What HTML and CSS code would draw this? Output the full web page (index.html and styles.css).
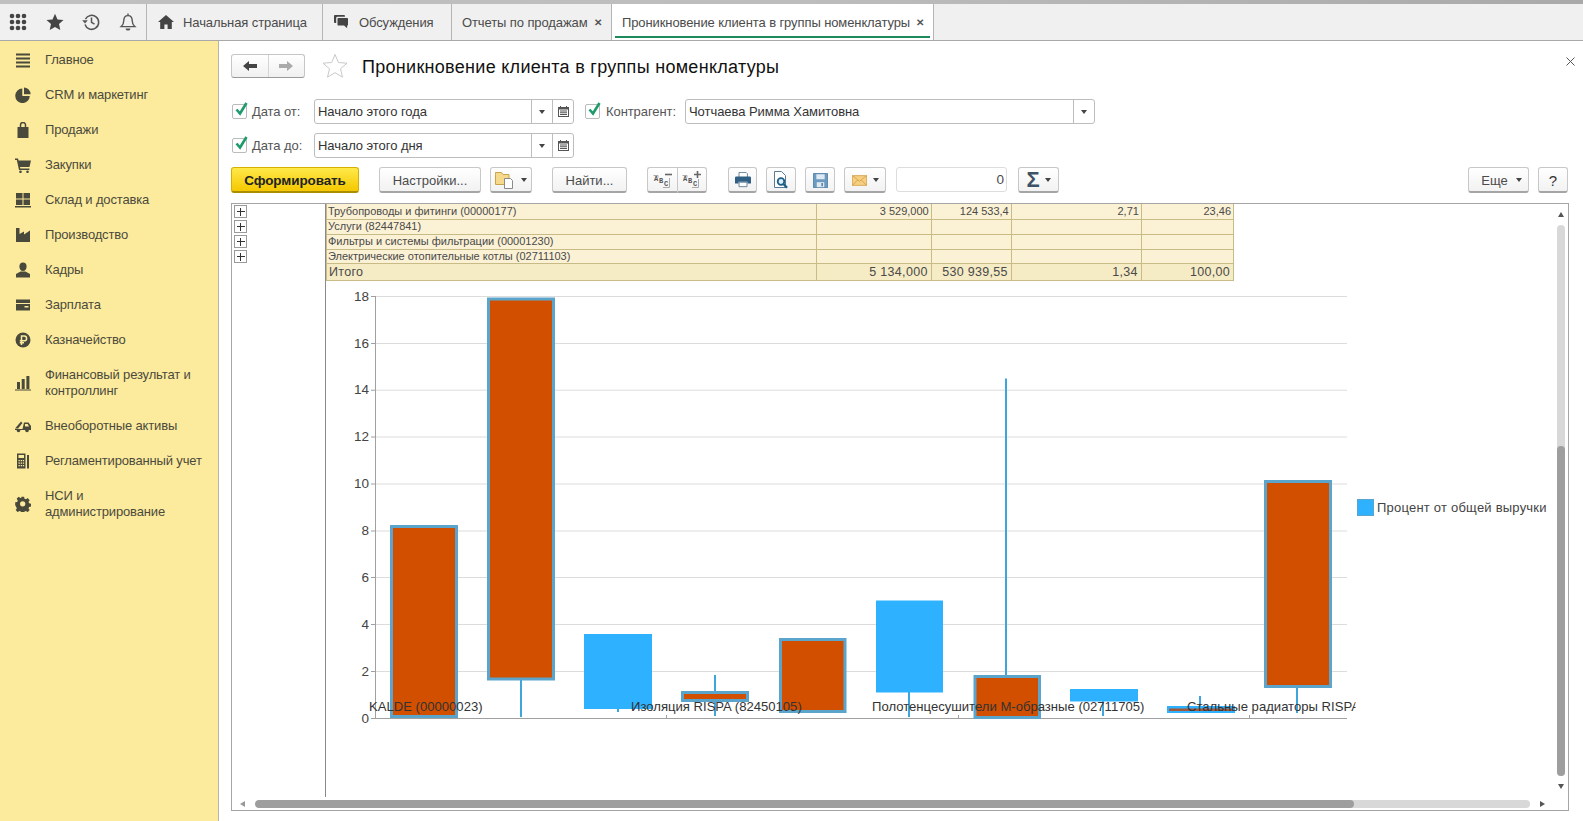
FILE: index.html
```html
<!DOCTYPE html>
<html lang="ru">
<head>
<meta charset="utf-8">
<title>Проникновение клиента в группы номенклатуры</title>
<link rel="stylesheet" href="styles.css">
</head>
<body>
<div class="topline"></div>
<header class="tabbar">
  <div class="quick">
    <svg class="qi" viewBox="0 0 18 18" width="18" height="18"><g fill="#444"><circle cx="3" cy="3" r="2.3"/><circle cx="9" cy="3" r="2.3"/><circle cx="15" cy="3" r="2.3"/><circle cx="3" cy="9" r="2.3"/><circle cx="9" cy="9" r="2.3"/><circle cx="15" cy="9" r="2.3"/><circle cx="3" cy="15" r="2.3"/><circle cx="9" cy="15" r="2.3"/><circle cx="15" cy="15" r="2.3"/></g></svg>
    <svg class="qi" viewBox="0 0 18 18" width="18" height="18"><path fill="#444" d="M9 .8l2.5 5.6 6 .6-4.5 4 1.3 6L9 14l-5.3 3 1.3-6-4.5-4 6-.6z"/></svg>
    <svg class="qi" viewBox="0 0 18 18" width="18" height="18"><g fill="none" stroke="#555" stroke-width="1.5"><path d="M3.4 6.2A7 7 0 1 1 3 11.5"/><path d="M9.5 4.6V9.4l3 1.8"/></g><path fill="#555" d="M.2 7.2h5.6L3 10.6z"/></svg>
    <svg class="qi" viewBox="0 0 18 18" width="18" height="18"><g fill="none" stroke="#555" stroke-width="1.4"><path d="M9 2.6c-3 0-4.2 2.3-4.2 5 0 3-1 4.6-2.6 6h13.6c-1.6-1.4-2.6-3-2.6-6 0-2.7-1.2-5-4.2-5z"/><path d="M9 .4v2.2"/></g><path fill="#555" d="M6.6 15.4h4.8A2.4 2.2 0 0 1 6.6 15.4z"/></svg>
  </div>
  <nav class="tabs">
    <div class="tab tab-home">
      <svg viewBox="0 0 16 14" width="16" height="14"><path fill="#444" d="M8 0l8 7h-2.2v7H9.6V9.4H6.4V14H2.2V7H0z"/></svg>
      <span>Начальная страница</span>
    </div>
    <div class="tab tab-disc">
      <svg viewBox="0 0 16 16" width="14" height="14"><path fill="#444" d="M1 0h10.5a1 1 0 0 1 1 1v1H4a1.5 1.5 0 0 0-1.500 1.500V9H1a1 1 0 0 1-1-1V1a1 1 0 0 1 1-1z"/><path fill="#444" d="M5 3.500h10a1 1 0 0 1 1 1V11a1 1 0 0 1-1 1v3l-3.500-3H5a1 1 0 0 1-1-1V4.500a1 1 0 0 1 1-1z"/></svg>
      <span>Обсуждения</span>
    </div>
    <div class="tab tab-sales"><span>Отчеты по продажам</span><b class="x">✕</b></div>
    <div class="tab tab-active"><span>Проникновение клиента в группы номенклатуры</span><b class="x">✕</b></div>
  </nav>
</header>
<div class="main">
  <aside class="side">
    <div class="si"><svg viewBox="0 0 16 16"><path d="M1 1.500h14v2H1zM1 5.500h14v2H1zM1 9.500h14v2H1zM1 13.500h14v2H1z"/></svg><span>Главное</span></div>
    <div class="si"><svg viewBox="0 0 16 16"><path d="M7.300 1.500v7.500H14.800A7.300 7.300 0 1 1 7.300 1.500z"/><path d="M9 .5a6.800 6.800 0 0 1 6.600 6.700H9z"/></svg><span>CRM и маркетинг</span></div>
    <div class="si"><svg viewBox="0 0 16 16"><path d="M2.500 5h11v11h-11z"/><path fill="none" stroke="#4a4a3c" stroke-width="1.500" d="M5.500 7V3a2.500 2.500 0 0 1 5 0v4"/></svg><span>Продажи</span></div>
    <div class="si"><svg viewBox="0 0 16 16"><path d="M0 1.500h3l.6 2H16l-1.500 6.500H5l.4 1.500h9v1.500H4L1.800 3H0z"/><circle cx="5.500" cy="14.800" r="1.300"/><circle cx="12.500" cy="14.800" r="1.300"/></svg><span>Закупки</span></div>
    <div class="si"><svg viewBox="0 0 16 16"><path d="M1 1h6.500v5.500H1zM8.500 1H15v5.500H8.500zM1 7.500h6.500V13H1zM8.500 7.500H15V13H8.500zM0 14h16v1.500H0z"/></svg><span>Склад и доставка</span></div>
    <div class="si"><svg viewBox="0 0 16 16"><path d="M1 1h3.500v6L9 4.500v3l6-4V15H1z"/></svg><span>Производство</span></div>
    <div class="si"><svg viewBox="0 0 16 16"><path d="M8 .5c2.300 0 3.600 1.700 3.600 3.900S10.300 9 8 9 4.400 6.600 4.400 4.400 5.700.5 8 .5z"/><path d="M5.500 9.500h5L15 12v3.500H1V12z"/></svg><span>Кадры</span></div>
    <div class="si"><svg viewBox="0 0 16 16"><path d="M1 2.500h14V6H1zM1 7h14v6.500H1z"/><path fill="#fdeb9d" d="M9.500 9h4v1.500h-4z"/></svg><span>Зарплата</span></div>
    <div class="si"><svg viewBox="0 0 16 16"><circle cx="8" cy="8" r="7.500"/><path fill="none" stroke="#fdeb9d" stroke-width="1.500" d="M6.500 13V4h2.700a2.300 2.300 0 0 1 0 4.800H4.800M4.800 10.800H9"/></svg><span>Казначейство</span></div>
    <div class="si si2"><svg viewBox="0 0 16 16"><path d="M2 7h3v7H2zM6.700 4h3v10h-3zM11.400 1h3v13h-3zM0 14.500h16V15.500H0z"/></svg><span>Финансовый результат и контроллинг</span></div>
    <div class="si"><svg viewBox="0 0 16 16"><path d="M0 10.500L6 3.500 7.500 5 3 10.500zM9 4.500h4.500L16 8v4H0v-1h7.500zM10 6v2.500h4L12.700 6z"/><circle cx="3.500" cy="12.500" r="1.800"/><circle cx="12" cy="12.500" r="1.800"/></svg><span>Внеоборотные активы</span></div>
    <div class="si"><svg viewBox="0 0 16 16"><path d="M2 .5h8.500v15H2z"/><path fill="#fdeb9d" d="M3.500 2h5.500v3H3.500zM3.500 7h1.300v1.300H3.500zM5.700 7H7v1.300H5.700zM7.800 7h1.300v1.300H7.800zM3.500 9.500h1.300v1.300H3.500zM5.700 9.500H7v1.300H5.700zM7.800 9.500h1.300v1.300H7.800zM3.500 12h1.300v1.300H3.500zM5.700 12H7v1.300H5.700zM7.800 12h1.300v1.300H7.800z"/><path d="M12 2h2v13.500h-2z"/></svg><span>Регламентированный учет</span></div>
    <div class="si si2"><svg viewBox="0 0 16 16"><path fill-rule="evenodd" d="M6.500.5h3l.4 2.100 1.500.6 1.800-1.200 2.100 2.100-1.200 1.800.6 1.500 2.100.4v3l-2.100.4-.6 1.500 1.200 1.800-2.100 2.100-1.800-1.200-1.500.6-.4 2.100h-3l-.4-2.100-1.500-.6-1.800 1.200-2.100-2.100 1.200-1.800-.6-1.500L.2 9.400v-3l2.100-.4.6-1.500L1.700 2.700 3.800.6l1.800 1.200 1.500-.6zM8 5.200a2.700 2.700 0 1 0 0 5.500 2.700 2.700 0 0 0 0-5.500z" transform="translate(0 .2) scale(.96)"/></svg><span>НСИ и<br>администрирование</span></div>
  </aside>
  <main class="content">
    <div class="head">
      <div class="nav-group">
        <div class="nav-b nav-back"><svg viewBox="0 0 14 10" width="14" height="10"><path fill="#444" d="M0 5l6-5v3h8v4H6v3z"/></svg></div>
        <div class="nav-b"><svg viewBox="0 0 14 10" width="14" height="10"><path fill="#aaa" d="M14 5L8 0v3H0v4h8v3z"/></svg></div>
      </div>
      <svg class="fav" viewBox="0 0 26 25" width="26" height="25"><path fill="#fff" stroke="#c9c9c9" d="M13 1.500l3.400 8 8.600.7-6.500 5.600 2 8.400L13 19.700 5.500 24.200l2-8.400L1 10.200l8.600-.7z"/></svg>
      <h1>Проникновение клиента в группы номенклатуры</h1>
      <svg class="close" viewBox="0 0 9 9" width="9" height="9"><path stroke="#555" fill="none" d="M.5.500l8 8M8.500.500l-8 8"/></svg>
    </div>
    <div class="filters">
      <div class="frow">
        <span class="chk"><svg viewBox="0 0 16 16" width="16" height="16"><path fill="none" stroke="#1f9a6b" stroke-width="2.600" d="M3.500 7.500l3.500 4L13.500 1"/></svg></span>
        <label class="lab lab1">Дата от:</label>
        <div class="inp inp-date"><span class="val">Начало этого года</span><i class="drop"><s class="tri"></s></i><i class="cal"><svg viewBox="0 0 11 11" width="11" height="11"><path fill="#555" d="M0 1h2V0h1v1h5V0h1v1h2v10H0zM1 3.500V10h9V3.500z"/><path fill="#555" d="M2 4.500h7v1H2zM2 6.300h7v1H2zM2 8.100h7v1H2z"/></svg></i></div>
        <span class="chk chk2"><svg viewBox="0 0 16 16" width="16" height="16"><path fill="none" stroke="#1f9a6b" stroke-width="2.600" d="M3.500 7.500l3.500 4L13.500 1"/></svg></span>
        <label class="lab lab2">Контрагент:</label>
        <div class="inp inp-cp"><span class="val">Чотчаева Римма Хамитовна</span><i class="drop"><s class="tri"></s></i></div>
      </div>
      <div class="frow">
        <span class="chk"><svg viewBox="0 0 16 16" width="16" height="16"><path fill="none" stroke="#1f9a6b" stroke-width="2.600" d="M3.500 7.500l3.500 4L13.500 1"/></svg></span>
        <label class="lab lab1">Дата до:</label>
        <div class="inp inp-date"><span class="val">Начало этого дня</span><i class="drop"><s class="tri"></s></i><i class="cal"><svg viewBox="0 0 11 11" width="11" height="11"><path fill="#555" d="M0 1h2V0h1v1h5V0h1v1h2v10H0zM1 3.500V10h9V3.500z"/><path fill="#555" d="M2 4.500h7v1H2zM2 6.300h7v1H2zM2 8.100h7v1H2z"/></svg></i></div>
      </div>
    </div>
    <div class="toolbar">
      <button class="btn primary">Сформировать</button>
      <button class="btn b-set">Настройки...</button>
      <button class="btn b-var"><svg viewBox="0 0 20 18" width="20" height="18"><path fill="#f6d98a" stroke="#c9a24c" d="M.5 3.500V1.500h6l1.500 2h6v10H.5z"/><path fill="#fff" stroke="#8a8a8a" d="M9.500 7.500h6l2 2v8h-8z"/></svg><s class="tri"></s></button>
      <button class="btn b-find">Найти...</button>
      <div class="grp">
        <button class="btn b-abc"><svg viewBox="0 0 20 18" width="20" height="18"><g class="abc"><text x="1" y="10">A</text><text x="6" y="12">B</text><text x="11" y="15">C</text></g><path stroke="#666" stroke-width="1.600" d="M12 3.500h7"/><path fill="none" stroke="#aaa" d="M.5 4.500h4.500v2M16.500 7v9.500H10"/></svg></button>
        <button class="btn b-abc"><svg viewBox="0 0 20 18" width="20" height="18"><g class="abc"><text x="1" y="10">A</text><text x="6" y="12">B</text><text x="11" y="15">C</text></g><path stroke="#666" stroke-width="1.600" d="M12 3.500h7M15.500 0v7"/><path fill="none" stroke="#aaa" d="M.5 4.500h4.500v2M16.500 8v8.500H10"/></svg></button>
      </div>
      <button class="btn b-ico b-print"><svg viewBox="0 0 20 18" width="18" height="16"><path fill="#fff" stroke="#5a7a94" d="M5.500 .5h8l1.500 1.500v5H5.500z"/><path fill="#2f5f83" d="M1 6.500q0-1.500 1.500-1.500h15q1.500 0 1.500 1.500V13h-4v-2H5v2H1z"/><path fill="#fff" stroke="#5a7a94" d="M5.500 11.500h9v5h-9z"/></svg></button>
      <button class="btn b-ico b-prev"><svg viewBox="0 0 20 18" width="20" height="18"><path fill="#fff" stroke="#5a7a94" d="M3.500 .5h7l4 4v12h-11z"/><circle cx="10" cy="10.500" r="3.300" fill="#d9eefc" stroke="#1d5d86" stroke-width="1.800"/><path stroke="#1d5d86" stroke-width="2.400" d="M12.500 13l3.500 3.800"/></svg></button>
      <button class="btn b-ico b-save"><svg viewBox="0 0 18 18" width="15" height="15"><path fill="#6d9ac0" stroke="#4c7a9f" d="M.5.500h17v17H.5z"/><path fill="#dfe9f2" d="M4 1.500h10v6H4z"/><path fill="#dfe9f2" d="M4.500 11h9v6h-9z"/><path fill="#5d86a8" d="M10 12h2v4h-2z"/></svg></button>
      <button class="btn b-mail"><svg viewBox="0 0 20 14" width="15" height="11"><path fill="#f5cf83" stroke="#d09a3a" d="M.5.500h19v13H.5z"/><path fill="none" stroke="#d09a3a" d="M.5.500L10 8 19.500.500M.5 13.500L7.500 6.500M19.500 13.500L12.500 6.500"/></svg><s class="tri"></s></button>
      <div class="numbox">0</div>
      <button class="btn b-sum"><span class="sig">Σ</span><s class="tri"></s></button>
      <div class="spacer"></div>
      <button class="btn b-more">Еще<s class="tri"></s></button>
      <button class="btn b-help">?</button>
    </div>
    <section class="report">
      <div class="gutter">
        <i class="plus"></i><i class="plus"></i><i class="plus"></i><i class="plus"></i>
      </div>
      <div class="sheet">
        <table class="rt">
          <colgroup><col class="c1"><col class="c2"><col class="c3"><col class="c4"><col class="c5"></colgroup>
          <tr><td>Трубопроводы и фитинги (00000177)</td><td class="n">3 529,000</td><td class="n">124 533,4</td><td class="n">2,71</td><td class="n">23,46</td></tr>
          <tr><td>Услуги (82447841)</td><td></td><td></td><td></td><td></td></tr>
          <tr><td>Фильтры и системы фильтрации (00001230)</td><td></td><td></td><td></td><td></td></tr>
          <tr><td>Электрические отопительные котлы (02711103)</td><td></td><td></td><td></td><td></td></tr>
          <tr class="tot"><td>Итого</td><td class="n">5 134,000</td><td class="n">530 939,55</td><td class="n">1,34</td><td class="n">100,00</td></tr>
        </table>
        <svg class="chart" viewBox="326 281 1230 516" width="1230" height="516">
          <defs><clipPath id="lc"><rect x="360" y="690" width="995.500" height="40"/></clipPath></defs>
          <g class="grid">
            <path d="M376 296.500H1347M376 343.500H1347M376 390.200H1347M376 437H1347M376 484H1347M376 531H1347M376 577.500H1347M376 624.500H1347M376 671.500H1347"/>
          </g>
          <path class="axis" d="M375.500 296V718.500H1347M371 296.500h5M371 343.500h5M371 390.200h5M371 437h5M371 484h5M371 531h5M371 577.500h5M371 624.500h5M371 671.500h5M371 718.500h5M666.500 715v4M958.500 715v4M1249.500 715v4"/>
          <g class="yl">
            <text x="369" y="300.500">18</text><text x="369" y="347.500">16</text><text x="369" y="394">14</text><text x="369" y="441">12</text><text x="369" y="488">10</text>
            <text x="369" y="535">8</text><text x="369" y="581.500">6</text><text x="369" y="628.500">4</text><text x="369" y="675.500">2</text><text x="369" y="722.500">0</text>
          </g>
          <g class="wick">
            <path d="M521 680V717M618 708V712M715 675V716M909 692V717M1006 378.500V675M1103 701V716M1200 696V706M1297 687V713"/>
          </g>
          <g class="up">
            <rect x="584" y="634" width="68" height="75"/>
            <rect x="876" y="600.500" width="67" height="92"/>
            <rect x="1070" y="689" width="68" height="12.500"/>
            <rect x="1167" y="706" width="68" height="7"/>
          </g>
          <g class="down">
            <rect x="391.500" y="526.500" width="65" height="190"/>
            <rect x="488.500" y="299" width="65" height="380"/>
            <rect x="682.500" y="692.500" width="65" height="8"/>
            <rect x="780.500" y="639.500" width="64.500" height="72"/>
            <rect x="975" y="676.500" width="64.500" height="41"/>
            <rect x="1265.500" y="481.500" width="65" height="205"/>
          </g>
          <rect class="thin" x="1169" y="708.500" width="64" height="2.500"/>
          <g class="xl" clip-path="url(#lc)">
            <text x="369" y="710.500">KALDE (00000023)</text>
            <text x="631" y="710.500">Изоляция RISPA (82450105)</text>
            <text x="872" y="710.500">Полотенцесушители М-образные (02711705)</text>
            <text x="1187" y="710.500">Стальные радиаторы RISPA (82450106)</text>
          </g>
          <rect class="lg" x="1357.500" y="499.500" width="16" height="16"/>
          <text class="lgt" x="1377" y="512">Процент от общей выручки</text>
        </svg>
      </div>
      <div class="vbar"><s class="au"></s><div class="vtrack"><div class="vthumb"></div></div><s class="ad"></s></div>
      <div class="hbar"><s class="al"></s><div class="htrack"><div class="hthumb"></div></div><s class="ar"></s></div>
    </section>
  </main>
</div>
</body>
</html>
```

FILE: styles.css
```css
* { box-sizing: border-box; }
html, body { margin: 0; padding: 0; }
body {
  width: 1583px; height: 821px; overflow: hidden; background: #fff;
  font-family: "Liberation Sans", Arial, sans-serif; font-size: 13px; color: #4b4b4b;
}
svg { display: block; flex: none; }
.topline { height: 4px; background: linear-gradient(90deg, #c0c0c0, #bdbdbd 50%, #a9a9a9); }
.tabbar { display: flex; height: 37px; background: #f0f0f0; border-bottom: 1px solid #a9a9a9; }
.quick { display: flex; align-items: center; width: 147px; padding-left: 9px; gap: 18.500px; border-right: 1px solid #b5b5b5; }
.tabs { display: flex; }
.tab { display: flex; align-items: center; height: 36px; border-right: 1px solid #b5b5b5; letter-spacing: -.1px; white-space: nowrap; }
.tab-home { width: 176px; padding-left: 11px; gap: 9px; }
.tab-disc { width: 129px; padding-left: 11px; gap: 11px; }
.tab-sales { width: 160px; padding-left: 10px; }
.tab-active { position: relative; width: 322px; padding-left: 10px; background: #fff; }
.tab-active::after { content: ""; position: absolute; left: 3px; right: 3px; top: 32px; height: 2px; background: #1d8a5c; }
.x { font-weight: 700; font-size: 10px; margin-left: 6px; color: #555; }
.main { display: flex; height: 780px; }
.side { width: 219px; flex: none; padding-top: 1px; background: #fdeb9d; border-right: 1px solid #b5b5a5; color: #4a4a3c; }
.si { display: flex; align-items: center; height: 35px; padding-left: 15px; gap: 14px; letter-spacing: -.15px; line-height: 16px; }
.si2 { height: 51px; }
.si svg { width: 16px; height: 16px; fill: #4a4a3c; }
.content { flex: 1; min-width: 0; display: flex; flex-direction: column; padding: 12px 15px 0 12px; }
.head { display: flex; align-items: center; height: 25px; }
.nav-group { display: flex; width: 74px; height: 24px; border: 1px solid #c6c6c6; border-bottom-color: #9a9a9a; border-radius: 3px; background: linear-gradient(#fff, #f0f0f0); }
.nav-b { flex: 1; display: flex; align-items: center; justify-content: center; }
.nav-back { border-right: 1px solid #d5d5d5; }
.fav { margin-left: 17px; }
.head h1 { margin: 3px 0 0 14px; font-size: 18px; font-weight: 400; color: #111; letter-spacing: .29px; white-space: nowrap; }
.close { margin-left: auto; margin-right: -7px; margin-top: -8px; }
.filters { display: flex; flex-direction: column; gap: 9px; margin-top: 21px; }
.frow { display: flex; align-items: center; height: 25px; }
.chk { position: relative; width: 15px; height: 15px; margin-left: 1px; border: 1px solid #bbb; border-radius: 2px; background: #fff; }
.chk svg { position: absolute; left: 0; top: -3px; }
.lab { letter-spacing: -.08px; white-space: nowrap; color: #555; }
.lab1 { width: 62px; margin-left: 5px; }
.lab2 { width: 79px; margin-left: 6px; }
.chk2 { margin-left: 11px; }
.inp { display: flex; align-items: stretch; height: 25px; border: 1px solid #bdbdbd; border-radius: 3px; background: #fff; }
.val { flex: 1; padding-left: 3px; line-height: 23px; letter-spacing: -.05px; color: #333; white-space: nowrap; }
.inp i { display: flex; align-items: center; justify-content: center; border-left: 1px solid #bdbdbd; }
.drop { width: 21px; }
.cal { width: 21px; }
.inp-date { width: 260px; }
.inp-cp { width: 410px; }
.tri { display: inline-block; width: 0; height: 0; border: 3px solid transparent; border-top: 4px solid #444; border-bottom: 0; }
.toolbar { display: flex; align-items: stretch; height: 26px; margin-top: 9px; }
.btn {
  display: flex; align-items: center; justify-content: center; padding: 1px 0 0; height: 26px;
  border: 1px solid #c8c8c8; border-bottom: 2px solid #a5a5a5; border-radius: 3px;
  background: linear-gradient(#fff, #f2f2f2); color: #4b4b4b; font: inherit; letter-spacing: 0;
}
.primary { width: 128px; background: linear-gradient(#ffe94a, #f5c800); border-color: #d5b000; border-bottom-color: #a98e00; color: #222; font-weight: 700; font-size: 13.500px; letter-spacing: -.1px; }
.b-set { width: 102px; margin-left: 20px; }
.b-var { width: 42px; margin-left: 9px; gap: 6px; }
.b-find { width: 75px; margin-left: 20px; }
.grp { display: flex; margin-left: 20px; }
.b-abc { width: 30px; }
.grp .b-abc:first-child { border-radius: 3px 0 0 3px; border-right: 0; }
.grp .b-abc:last-child { border-radius: 0 3px 3px 0; }
.abc text { font: 700 7px "Liberation Mono", monospace; fill: #555; }
.b-ico { width: 30px; }
.b-print { width: 29px; margin-left: 21px; }
.b-prev, .b-save { margin-left: 9px; }
.b-mail { width: 42px; margin-left: 9px; gap: 6px; }
.numbox { width: 111px; margin-left: 10px; height: 25px; padding-right: 2px; border: 1px solid #ddd; border-radius: 3px; text-align: right; line-height: 24px; font-size: 13.500px; }
.b-sum { width: 41px; margin-left: 11px; gap: 5px; }
.sig { font-size: 22px; font-weight: 700; line-height: 20px; color: #3e5366; }
.spacer { flex: 1; }
.b-more { width: 61px; padding-left: 6px; gap: 8px; }
.b-help { width: 30px; margin-left: 9px; font-size: 15px; color: #333; }
.report { position: relative; display: flex; align-items: flex-start; width: 1338px; height: 608px; margin-top: 10px; border: 1px solid #a5a5a5; overflow: hidden; }
.gutter { display: flex; flex-direction: column; gap: 2px; width: 94px; height: 593px; padding: 1px 0 0 2px; border-right: 1px solid #8a8a8a; flex: none; }
.plus { position: relative; display: block; width: 13px; height: 13px; border: 1px solid #9a9a9a; background: #fff; }
.plus::before { content: ""; position: absolute; left: 1.500px; right: 1.500px; top: 5px; height: 1px; background: #333; }
.plus::after { content: ""; position: absolute; top: 1.500px; bottom: 1.500px; left: 5px; width: 1px; background: #333; }
.sheet { flex: none; }
.rt { border-collapse: collapse; table-layout: fixed; width: 908px; font-size: 11px; color: #4a4a4a; letter-spacing: 0; }
.c1 { width: 489px; } .c2 { width: 115px; } .c3 { width: 80px; } .c4 { width: 130px; } .c5 { width: 92px; }
.rt td { height: 15px; padding: 0 2px 0 1px; background: #fbf1d4; border: 1px solid #c9bb85; line-height: 13px; white-space: nowrap; overflow: hidden; }
.rt tr:first-child td { border-top: 0; }
.rt tr:nth-child(4) td { height: 14px; }
.rt td.n { text-align: right; }
.rt .tot td { background: #f5ebc4; font-size: 12.500px; letter-spacing: .3px; height: 17px; padding: 1px 3px 0 2px; }
.grid path { stroke: #dcdcdc; fill: none; stroke-width: 1; }
.axis { stroke: #a0a0a0; fill: none; stroke-width: 1; }
.yl text { font-size: 13.500px; text-anchor: end; fill: #444; }
.wick path { stroke: #3fa6dc; stroke-width: 2; fill: none; }
.up rect { fill: #2eb1ff; }
.down rect { fill: #d24f00; stroke: #5ba5cc; stroke-width: 3; }
.thin { fill: #a3583a; }
.xl text { font-size: 13.100px; fill: #333; }
.lg { fill: #2eb1ff; stroke: #5ba5cc; }
.lgt { font-size: 13px; letter-spacing: .22px; fill: #444; }
.vbar { position: absolute; right: 3px; top: 8px; bottom: 21px; width: 9px; display: flex; flex-direction: column; align-items: center; gap: 8px; }
.vtrack { flex: 1; width: 8px; display: flex; flex-direction: column; justify-content: flex-end; background: #d8d8d8; border-radius: 4px; }
.vthumb { height: 330px; background: #9e9e9e; border-radius: 4px; }
.au { width: 0; height: 0; border: 3.500px solid transparent; border-bottom: 5px solid #555; border-top: 0; }
.ad { width: 0; height: 0; border: 3.500px solid transparent; border-top: 5px solid #555; border-bottom: 0; }
.hbar { position: absolute; left: 8px; right: 23px; bottom: 2px; height: 8px; display: flex; align-items: center; gap: 10px; }
.htrack { flex: 1; height: 8px; background: #d8d8d8; border-radius: 4px; overflow: hidden; }
.hthumb { width: 1099px; height: 8px; background: #9e9e9e; border-radius: 4px; }
.al { width: 0; height: 0; border: 3.500px solid transparent; border-right: 5px solid #999; border-left: 0; }
.ar { width: 0; height: 0; border: 3.500px solid transparent; border-left: 5px solid #555; border-right: 0; }
```
